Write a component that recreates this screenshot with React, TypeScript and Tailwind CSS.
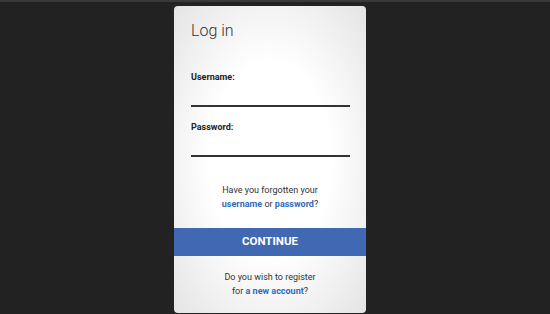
export default function App() {
  return (
    <div
      className="flex h-[314px] w-[550px] justify-center overflow-hidden border-t-2 border-[#3a3a3a] bg-[#222222] pr-[10px] pt-[4px]"
      style={{ fontFamily: "Roboto, 'Liberation Sans', sans-serif" }}
    >
      <div className="flex h-[307px] w-[192px] flex-col rounded-[4px] bg-[radial-gradient(ellipse_at_center,#ffffff_45%,#e4e4e4_100%)]">
        <div className="pl-[17px] pr-[16px] pt-[15px]">
          <h1 className="text-[16px] font-light leading-[20px] text-[#333333]">Log in</h1>
          <label className="mt-[29px] block text-[9px] font-bold leading-[14px] text-[#222222]">
            Username:
          </label>
          <div className="mt-[21px] h-[2px] w-full bg-[#333333]" />
          <label className="mt-[13px] block text-[9px] font-bold leading-[14px] text-[#222222]">
            Password:
          </label>
          <div className="mt-[21px] h-[2px] w-full bg-[#333333]" />
        </div>
        <p className="mt-[26px] text-center text-[9px] leading-[14px] text-[#333333]">
          Have you forgotten your
          <br />
          <a className="font-bold text-[#2f6db8]">username</a> or{" "}
          <a className="font-bold text-[#2f6db8]">password</a>?
        </p>
        <button className="mt-[17px] h-[28px] w-full bg-[#4169b3] text-[11.5px] font-bold text-white">
          CONTINUE
        </button>
        <p className="mt-[14px] text-center text-[9px] leading-[14px] text-[#333333]">
          Do you wish to register
          <br />
          for <a className="font-bold text-[#2f6db8]">a new account</a>?
        </p>
      </div>
    </div>
  );
}
